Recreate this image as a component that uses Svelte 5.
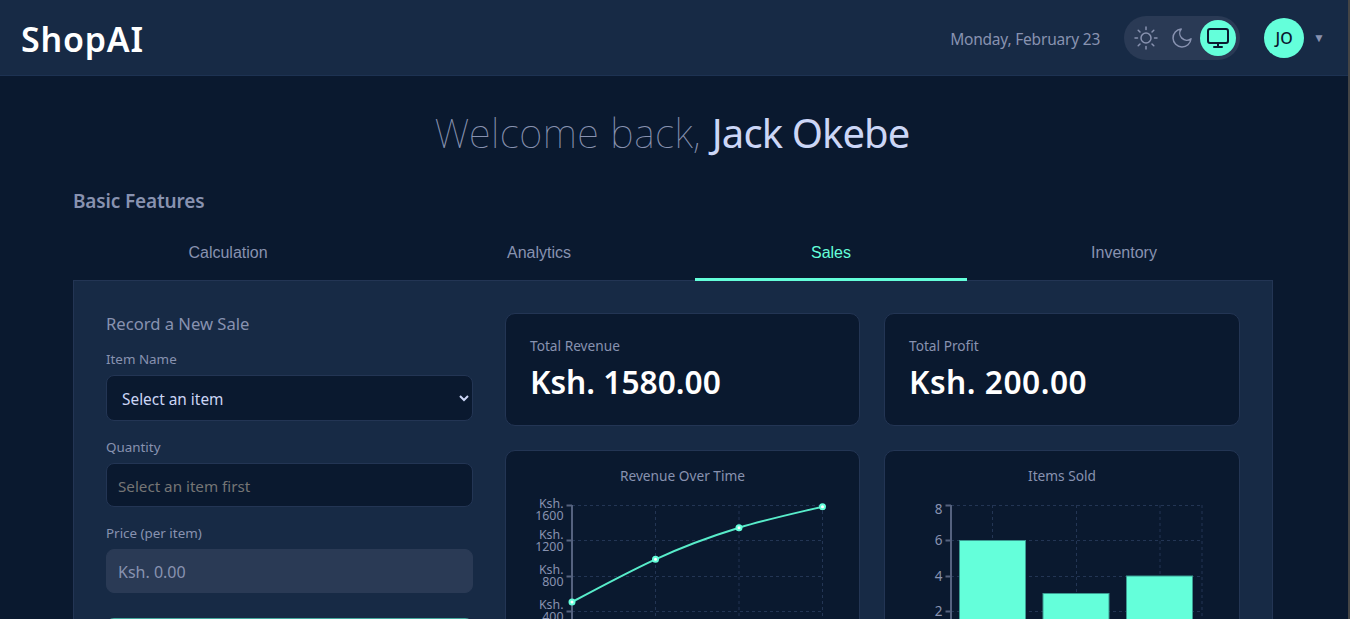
<script>
  let tabs = ['Calculation', 'Analytics', 'Sales', 'Inventory'];
  let active = $state('Sales');

  // chart geometry, viewBox is the card's own pixels
  const gridY = [54.5, 89.5, 125.5, 160.5];
  const lineX = [66, 149.5, 233, 316.5];
  const lineY = [151, 108.3, 76.7, 55.7];
  const linePath = `M${lineX[0]} ${lineY[0]} C 94 136, 122 121, ${lineX[1]} ${lineY[1]} C 178 95, 206 85, ${lineX[2]} ${lineY[2]} C 262 68, 290 62, ${lineX[3]} ${lineY[3]}`;
  const revTicks = [
    { y: 54.5, a: 'Ksh.', b: '1600', ay: 57, by: 68.5 },
    { y: 89.5, a: 'Ksh.', b: '1200', ay: 87.5, by: 100 },
    { y: 125.5, a: 'Ksh.', b: '800', ay: 122.5, by: 134.5 },
    { y: 160.5, a: 'Ksh.', b: '400', ay: 158, by: 169.5 }
  ];
  const itemTicks = [
    { y: 54.5, label: '8', ty: 63 },
    { y: 89.5, label: '6', ty: 94 },
    { y: 125.5, label: '4', ty: 129.5 },
    { y: 160.5, label: '2', ty: 165 }
  ];
  const bars = [
    { x: 74.5, top: 89.5 },
    { x: 158, top: 142.5 },
    { x: 241.5, top: 125 }
  ];
</script>

<div class="scroll-edge"></div>

<header class="topbar">
  <div class="logo">ShopAI</div>
  <div class="top-right">
    <span class="date">Monday, February 23</span>
    <div class="theme">
      <button class="theme-btn" aria-label="Light">
        <svg width="24" height="24" viewBox="0 0 24 24" fill="none" stroke="currentColor" stroke-width="1.5" stroke-linecap="round">
          <circle cx="12" cy="12" r="5" />
          <path d="M12 1v2.5M12 20.5V23M1 12h2.5M20.5 12H23M4.2 4.2l1.8 1.8M18 18l1.8 1.8M4.2 19.8L6 18M18 6l1.8-1.8" />
        </svg>
      </button>
      <button class="theme-btn" aria-label="Dark">
        <svg width="24" height="24" viewBox="0 0 24 24" fill="none" stroke="currentColor" stroke-width="1.5" stroke-linejoin="round">
          <path d="M21 12.8A9 9 0 1 1 11.2 3a7 7 0 0 0 9.8 9.8z" />
        </svg>
      </button>
      <button class="theme-btn on" aria-label="System">
        <svg width="24" height="24" viewBox="0 0 24 24" fill="none" stroke="currentColor" stroke-width="2" stroke-linecap="round" stroke-linejoin="round">
          <rect x="2" y="3" width="20" height="14" rx="2" />
          <path d="M8 21h8M12 17v4" />
        </svg>
      </button>
    </div>
    <div class="user">
      <div class="avatar">JO</div>
      <span class="caret">▼</span>
    </div>
  </div>
</header>

<div class="shell">
  <main class="page">
    <h1 class="welcome">Welcome back, <span>Jack Okebe</span></h1>
    <h2 class="section">Basic Features</h2>

    <nav class="tabs">
      {#each tabs as t}
        <button class="tab" class:active={active === t} onclick={() => (active = t)}>{t}</button>
      {/each}
    </nav>

    <section class="panel">
      <form class="sale-form">
        <h3>Record a New Sale</h3>
        <div class="field">
          <label for="item">Item Name</label>
          <select id="item">
            <option>Select an item</option>
          </select>
        </div>
        <div class="field">
          <label for="qty">Quantity</label>
          <input id="qty" type="text" placeholder="Select an item first" />
        </div>
        <div class="field">
          <label for="price">Price (per item)</label>
          <input id="price" type="text" value="Ksh. 0.00" disabled />
        </div>
        <button type="button" class="submit" disabled>Record Sale</button>
      </form>

      <div class="dash">
        <div class="card stat">
          <div class="stat-label">Total Revenue</div>
          <div class="stat-value">Ksh. 1580.00</div>
        </div>
        <div class="card stat">
          <div class="stat-label">Total Profit</div>
          <div class="stat-value wide">Ksh. 200.00</div>
        </div>

        <div class="card chart">
          <div class="chart-title">Revenue Over Time</div>
          <svg class="plot" width="354" height="300" viewBox="0 0 354 300">
            <g class="grid">
              {#each gridY as y}
                <line x1="66" x2="317" y1={y} y2={y} />
              {/each}
              {#each lineX.slice(1) as x}
                <line x1={x} x2={x} y1="54" y2="300" />
              {/each}
            </g>
            <line class="axis" x1="66" x2="66" y1="54" y2="300" />
            {#each revTicks as t}
              <line class="axis" x1="60.5" x2="66" y1={t.y} y2={t.y} />
              <text class="tick" x="57.5" y={t.ay} text-anchor="end">{t.a}</text>
              <text class="tick" x="57.5" y={t.by} text-anchor="end">{t.b}</text>
            {/each}
            <path class="curve" d={linePath} />
            {#each lineX as x, i}
              <circle class="dot" cx={x} cy={lineY[i]} r="2.5" />
            {/each}
          </svg>
        </div>

        <div class="card chart">
          <div class="chart-title">Items Sold</div>
          <svg class="plot" width="354" height="300" viewBox="0 0 354 300">
            <g class="grid">
              {#each gridY as y}
                <line x1="66" x2="317" y1={y} y2={y} />
              {/each}
              <line x1="107.5" x2="107.5" y1="54" y2="300" />
              <line x1="191.5" x2="191.5" y1="54" y2="300" />
              <line x1="275" x2="275" y1="54" y2="300" />
              <line x1="317" x2="317" y1="54" y2="300" />
            </g>
            {#each bars as b}
              <rect class="bar" x={b.x} y={b.top} width="66" height={300 - b.top} />
            {/each}
            <line class="axis" x1="66" x2="66" y1="54" y2="300" />
            {#each itemTicks as t}
              <line class="axis" x1="60.5" x2="66" y1={t.y} y2={t.y} />
              <text class="tick big" x="57.5" y={t.ty} text-anchor="end">{t.label}</text>
            {/each}
          </svg>
        </div>
      </div>
    </section>
  </main>
</div>

<style>
  :global(body) {
    background: #0a192f;
    color: #8892b0;
    font-family: "Noto Sans", sans-serif;
  }
  /* thin scrollbar sliver at the window edge */
  .scroll-edge {
    position: fixed;
    top: 0;
    right: 0;
    bottom: 0;
    width: 2px;
    background: #454545;
    z-index: 5;
  }
  .topbar {
    height: 76px;
    box-sizing: border-box;
    background: #172a45;
    border-bottom: 1px solid #1d3252;
    display: flex;
    align-items: center;
    justify-content: space-between;
    padding: 0 25px 0 21px;
  }
  .logo {
    padding-top: 2px;
    font-size: 34px;
    font-weight: 600;
    color: #fff;
    letter-spacing: 0.8px;
  }
  .top-right {
    display: flex;
    align-items: center;
  }
  .date {
    padding-top: 2px;
    font-size: 15.5px;
    letter-spacing: -0.2px;
    margin-right: 24px;
  }
  .theme {
    display: flex;
    align-items: center;
    height: 44px;
    padding: 0 4px;
    border-radius: 22px;
    background: #2a3a55;
  }
  .theme-btn {
    width: 36px;
    height: 36px;
    padding: 0;
    border: 0;
    background: none;
    border-radius: 50%;
    color: #8892b0;
    display: grid;
    place-items: center;
  }
  .theme-btn.on {
    background: #64ffda;
    color: #0a192f;
  }
  .user {
    display: flex;
    align-items: center;
    gap: 9px;
    margin-left: 24px;
  }
  .avatar {
    width: 40px;
    height: 40px;
    border-radius: 50%;
    background: #64ffda;
    color: #0a192f;
    font-size: 16px;
    font-weight: 500;
    display: grid;
    place-items: center;
  }
  .caret {
    font-size: 12px;
  }
  .shell {
    padding-right: 4px;
  }
  .page {
    width: 1200px;
    margin: 0 auto;
    padding-top: 29px;
  }
  .welcome {
    margin: 0 0 26px;
    padding-right: 2px;
    text-align: center;
    font-size: 40px;
    line-height: 56px;
    font-weight: 100;
    letter-spacing: 0.5px;
    color: #8892b0;
  }
  .welcome span {
    font-weight: 400;
    letter-spacing: -0.9px;
    color: #ccd6f6;
  }
  .section {
    margin: 0 0 21px;
    font-size: 19px;
    line-height: 28px;
    font-weight: 600;
    letter-spacing: -0.15px;
    color: #8892b0;
  }
  .tabs {
    display: grid;
    grid-template-columns: 310px 312px 272px 306px;
    height: 45px;
    margin-bottom: -1px;
    position: relative;
  }
  .tab {
    height: 45px;
    padding: 0 0 8px;
    border: 0;
    border-bottom: 3px solid transparent;
    background: none;
    color: #8892b0;
    font-family: "Liberation Sans", Arial, sans-serif;
    font-size: 16px;
    line-height: 20px;
    display: block;
    box-sizing: border-box;
    text-align: center;
  }
  .tab:last-child {
    padding-left: 8px;
  }
  .tab.active {
    color: #64ffda;
    border-bottom-color: #64ffda;
  }
  .panel {
    box-sizing: border-box;
    display: grid;
    grid-template-columns: 367px 1fr;
    gap: 32px;
    padding: 32px;
    background: #172a45;
    border: 1px solid #233554;
  }
  .sale-form h3 {
    margin: 0 0 14px;
    font-size: 16.6px;
    line-height: 22px;
    font-weight: 400;
    color: #8892b0;
  }
  .field {
    display: flex;
    flex-direction: column;
    margin-bottom: 16px;
  }
  .field label {
    font-size: 13.4px;
    line-height: 20px;
    margin-bottom: 6px;
  }
  select, input {
    box-sizing: border-box;
    width: 100%;
    height: 44px;
    border: 1px solid #233554;
    border-radius: 8px;
    background: #0a192f;
    color: #ccd6f6;
    font-family: inherit;
    font-size: 15.2px;
    padding: 1px 11px 0;
  }
  select {
    height: 46px;
    padding-top: 2px;
    font-size: 15.4px;
  }
  input::placeholder {
    color: #757575;
  }
  input:disabled {
    background: #2a3a55;
    border-color: #2a3a55;
    color: #8892b0;
    font-size: 16px;
  }
  .submit {
    display: block;
    width: 100%;
    margin: 25px 0 0;
    height: 46px;
    border: 0;
    border-radius: 8px;
    background: #64ffda;
    opacity: 0.6;
  }
  .dash {
    display: grid;
    grid-template-columns: 355px 356px;
    gap: 24px;
    align-content: start;
  }
  .card {
    box-sizing: border-box;
    background: #0a192f;
    border: 1px solid #233554;
    border-radius: 10px;
  }
  .stat {
    height: 113px;
    padding: 22px 24px;
  }
  .stat-label {
    font-size: 13.7px;
    line-height: 20px;
  }
  .stat-value {
    margin-top: 6px;
    font-size: 31.7px;
    line-height: 40px;
    font-weight: 600;
    color: #fff;
  }
  .stat-value.wide {
    letter-spacing: 0.5px;
  }
  .chart {
    position: relative;
    height: 340px;
    overflow: hidden;
  }
  .chart-title {
    position: absolute;
    top: 15px;
    left: 0;
    right: 0;
    text-align: center;
    font-size: 13.7px;
    line-height: 20px;
  }
  .plot {
    display: block;
  }
  .grid line {
    stroke: #233554;
    stroke-width: 1;
    stroke-dasharray: 3 3;
  }
  .axis {
    stroke: #55627f;
    stroke-width: 2;
  }
  .tick {
    fill: #8892b0;
    font-size: 12.4px;
  }
  .tick.big {
    font-size: 13.5px;
  }
  .curve {
    fill: none;
    stroke: #58ecca;
    stroke-width: 2;
  }
  .dot {
    fill: #fff;
    stroke: #64ffda;
    stroke-width: 2;
  }
  .bar {
    fill: #64ffda;
    stroke: #3a9c92;
    stroke-width: 1;
  }
</style>
